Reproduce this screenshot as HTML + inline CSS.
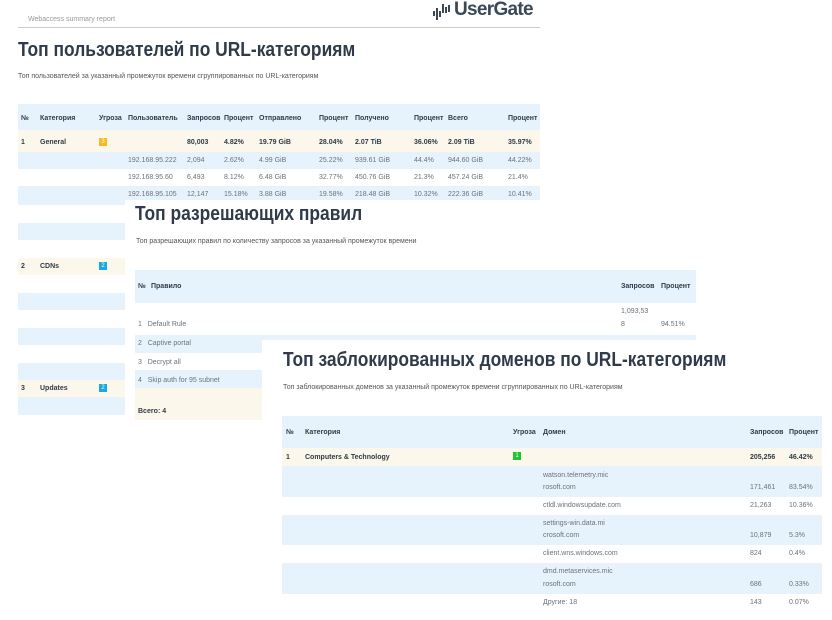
<!DOCTYPE html>
<html><head><meta charset="utf-8"><style>
body{margin:0;width:832px;height:620px;overflow:hidden;background:#fff;font-family:"Liberation Sans",sans-serif;color:#3a4550;position:relative}
.a{position:absolute}
.t{position:absolute;font-size:7px;white-space:nowrap;line-height:9px}
.b{font-weight:bold;color:#2f3b4a}
.g{color:#6a737c}
.h{position:absolute;font-weight:bold;font-size:20px;color:#2f3b4a;white-space:nowrap;transform:scaleX(0.87);transform-origin:0 0}
.sub{position:absolute;font-size:7px;color:#555;white-space:nowrap}
.bl{background:#e6f3fd}.be{background:#fbf7ea}.w{background:#fff}
.badge{position:absolute;width:8px;height:8px;font-size:6px;color:#fff;text-align:center;line-height:8px}
</style></head><body>
<!-- panel 1 -->
<div class="t" style="left:28px;top:15px;color:#999;font-size:7px">Webaccess summary report</div>
<div class="a" style="left:18px;top:27px;width:522px;height:1px;background:#ccc"></div>
<svg class="a" style="left:433px;top:3px" width="20" height="18"><g fill="#3a4858"><rect x="0" y="8" width="2" height="5"/><rect x="3" y="5" width="2" height="12"/><rect x="6" y="8" width="2" height="6"/><rect x="9" y="1" width="2" height="9"/><rect x="12" y="4" width="2" height="6"/><rect x="15" y="2" width="2" height="7"/></g></svg>
<div class="a" style="left:454px;top:-1px;font-size:19px;font-weight:bold;color:#3a4858;letter-spacing:-0.7px">UserGate</div>
<div class="h" style="left:18px;top:39px">Топ пользователей по URL-категориям</div>
<div class="sub" style="left:18px;top:73px">Топ пользователей за указанный промежуток времени сгруппированных по URL-категориям</div>
<div class="a bl" style="left:18px;top:104px;width:522px;height:26px"></div>
<div class="a be" style="left:18px;top:130px;width:522px;height:22px"></div>
<div class="a bl" style="left:18px;top:152px;width:522px;height:17px"></div>
<div class="a bl" style="left:18px;top:186px;width:522px;height:14px"></div>
<div class="t b" style="left:21px;top:114px">№</div><div class="t b" style="left:40px;top:114px">Категория</div><div class="t b" style="left:99px;top:114px">Угроза</div><div class="t b" style="left:128px;top:114px">Пользователь</div><div class="t b" style="left:187px;top:114px">Запросов</div><div class="t b" style="left:224px;top:114px">Процент</div><div class="t b" style="left:259px;top:114px">Отправлено</div><div class="t b" style="left:319px;top:114px">Процент</div><div class="t b" style="left:355px;top:114px">Получено</div><div class="t b" style="left:414px;top:114px">Процент</div><div class="t b" style="left:448px;top:114px">Всего</div><div class="t b" style="left:508px;top:114px">Процент</div>
<div class="t b" style="left:21px;top:138px">1</div><div class="t b" style="left:40px;top:138px">General</div><div class="badge" style="left:99px;top:138px;background:#f6b921">3</div><div class="t b" style="left:187px;top:138px">80,003</div><div class="t b" style="left:224px;top:138px">4.82%</div><div class="t b" style="left:259px;top:138px">19.79 GiB</div><div class="t b" style="left:319px;top:138px">28.04%</div><div class="t b" style="left:355px;top:138px">2.07 TiB</div><div class="t b" style="left:414px;top:138px">36.06%</div><div class="t b" style="left:448px;top:138px">2.09 TiB</div><div class="t b" style="left:508px;top:138px">35.97%</div>
<div class="t g" style="left:128px;top:156px">192.168.95.222</div><div class="t g" style="left:187px;top:156px">2,094</div><div class="t g" style="left:224px;top:156px">2.62%</div><div class="t g" style="left:259px;top:156px">4.99 GiB</div><div class="t g" style="left:319px;top:156px">25.22%</div><div class="t g" style="left:355px;top:156px">939.61 GiB</div><div class="t g" style="left:414px;top:156px">44.4%</div><div class="t g" style="left:448px;top:156px">944.60 GiB</div><div class="t g" style="left:508px;top:156px">44.22%</div>
<div class="t g" style="left:128px;top:173px">192.168.95.60</div><div class="t g" style="left:187px;top:173px">6,493</div><div class="t g" style="left:224px;top:173px">8.12%</div><div class="t g" style="left:259px;top:173px">6.48 GiB</div><div class="t g" style="left:319px;top:173px">32.77%</div><div class="t g" style="left:355px;top:173px">450.76 GiB</div><div class="t g" style="left:414px;top:173px">21.3%</div><div class="t g" style="left:448px;top:173px">457.24 GiB</div><div class="t g" style="left:508px;top:173px">21.4%</div>
<div class="t g" style="left:128px;top:190px">192.168.95.105</div><div class="t g" style="left:187px;top:190px">12,147</div><div class="t g" style="left:224px;top:190px">15.18%</div><div class="t g" style="left:259px;top:190px">3.88 GiB</div><div class="t g" style="left:319px;top:190px">19.58%</div><div class="t g" style="left:355px;top:190px">218.48 GiB</div><div class="t g" style="left:414px;top:190px">10.32%</div><div class="t g" style="left:448px;top:190px">222.36 GiB</div><div class="t g" style="left:508px;top:190px">10.41%</div>
<!-- left strips -->
<div class="a bl" style="left:18px;top:200px;width:107px;height:5px"></div>
<div class="a bl" style="left:18px;top:223px;width:107px;height:17px"></div>
<div class="a be" style="left:18px;top:258px;width:107px;height:17px"></div>
<div class="a bl" style="left:18px;top:293px;width:107px;height:17px"></div>
<div class="a bl" style="left:18px;top:328px;width:107px;height:17px"></div>
<div class="a bl" style="left:18px;top:363px;width:107px;height:17px"></div>
<div class="a be" style="left:18px;top:380px;width:107px;height:17px"></div>
<div class="a bl" style="left:18px;top:397px;width:107px;height:18px"></div>
<div class="t b" style="left:21px;top:262px">2</div><div class="t b" style="left:40px;top:262px">CDNs</div><div class="badge" style="left:99px;top:262px;background:#1ba8e0">2</div>
<div class="t b" style="left:21px;top:384px">3</div><div class="t b" style="left:40px;top:384px">Updates</div><div class="badge" style="left:99px;top:384px;background:#1ba8e0">2</div>
<!-- panel 2 -->
<div class="a w" style="left:125px;top:200px;width:575px;height:140px"></div>
<div class="h" style="left:135px;top:203px">Топ разрешающих правил</div>
<div class="sub" style="left:136px;top:238px">Топ разрешающих правил по количеству запросов за указанный промежуток времени</div>
<div class="a bl" style="left:135px;top:270px;width:561px;height:33px"></div>
<div class="a bl" style="left:135px;top:335px;width:561px;height:18px"></div>
<div class="a bl" style="left:135px;top:370px;width:127px;height:18px"></div>
<div class="a be" style="left:135px;top:388px;width:127px;height:32px"></div>
<div class="t b" style="left:138px;top:282px">№</div><div class="t b" style="left:151px;top:282px">Правило</div><div class="t b" style="left:621px;top:282px">Запросов</div><div class="t b" style="left:661px;top:282px">Процент</div>
<div class="t g" style="left:621px;top:307px">1,093,53</div><div class="t g" style="left:621px;top:320px">8</div><div class="t g" style="left:661px;top:320px">94.51%</div>
<div class="t g" style="left:138px;top:320px">1&nbsp;&nbsp;&nbsp;Default Rule</div>
<div class="t g" style="left:138px;top:339px">2&nbsp;&nbsp;&nbsp;Captive portal</div>
<div class="t g" style="left:138px;top:358px">3&nbsp;&nbsp;&nbsp;Decrypt all</div>
<div class="t g" style="left:138px;top:376px">4&nbsp;&nbsp;&nbsp;Skip auth for 95 subnet</div>
<div class="t b" style="left:138px;top:407px">Всего: 4</div>
<!-- panel 3 -->
<div class="a w" style="left:262px;top:340px;width:570px;height:280px"></div>
<div class="h" style="left:283px;top:349px">Топ заблокированных доменов по URL-категориям</div>
<div class="sub" style="left:283px;top:384px">Топ заблокированных доменов за указанный промежуток времени сгруппированных по URL-категориям</div>
<div class="a bl" style="left:282px;top:416px;width:540px;height:32px"></div>
<div class="a be" style="left:282px;top:448px;width:540px;height:18px"></div>
<div class="a bl" style="left:282px;top:466px;width:540px;height:31px"></div>
<div class="a bl" style="left:282px;top:515px;width:540px;height:30px"></div>
<div class="a bl" style="left:282px;top:563px;width:540px;height:31px"></div>
<div class="t b" style="left:286px;top:428px">№</div><div class="t b" style="left:305px;top:428px">Категория</div><div class="t b" style="left:513px;top:428px">Угроза</div><div class="t b" style="left:543px;top:428px">Домен</div><div class="t b" style="left:750px;top:428px">Запросов</div><div class="t b" style="left:789px;top:428px">Процент</div>
<div class="t b" style="left:286px;top:453px">1</div><div class="t b" style="left:305px;top:453px">Computers &amp; Technology</div><div class="badge" style="left:513px;top:452px;background:#22c32e">1</div><div class="t b" style="left:750px;top:453px">205,256</div><div class="t b" style="left:789px;top:453px">46.42%</div>
<div class="t g" style="left:543px;top:471px">watson.telemetry.mic</div><div class="t g" style="left:543px;top:483px">rosoft.com</div><div class="t g" style="left:750px;top:483px">171,461</div><div class="t g" style="left:789px;top:483px">83.54%</div>
<div class="t g" style="left:543px;top:501px">ctldl.windowsupdate.com</div><div class="t g" style="left:750px;top:501px">21,263</div><div class="t g" style="left:789px;top:501px">10.36%</div>
<div class="t g" style="left:543px;top:519px">settings-win.data.mi</div><div class="t g" style="left:543px;top:531px">crosoft.com</div><div class="t g" style="left:750px;top:531px">10,879</div><div class="t g" style="left:789px;top:531px">5.3%</div>
<div class="t g" style="left:543px;top:549px">client.wns.windows.com</div><div class="t g" style="left:750px;top:549px">824</div><div class="t g" style="left:789px;top:549px">0.4%</div>
<div class="t g" style="left:543px;top:567px">dmd.metaservices.mic</div><div class="t g" style="left:543px;top:580px">rosoft.com</div><div class="t g" style="left:750px;top:580px">686</div><div class="t g" style="left:789px;top:580px">0.33%</div>
<div class="t g" style="left:543px;top:598px">Другие: 18</div><div class="t g" style="left:750px;top:598px">143</div><div class="t g" style="left:789px;top:598px">0.07%</div>
</body></html>
